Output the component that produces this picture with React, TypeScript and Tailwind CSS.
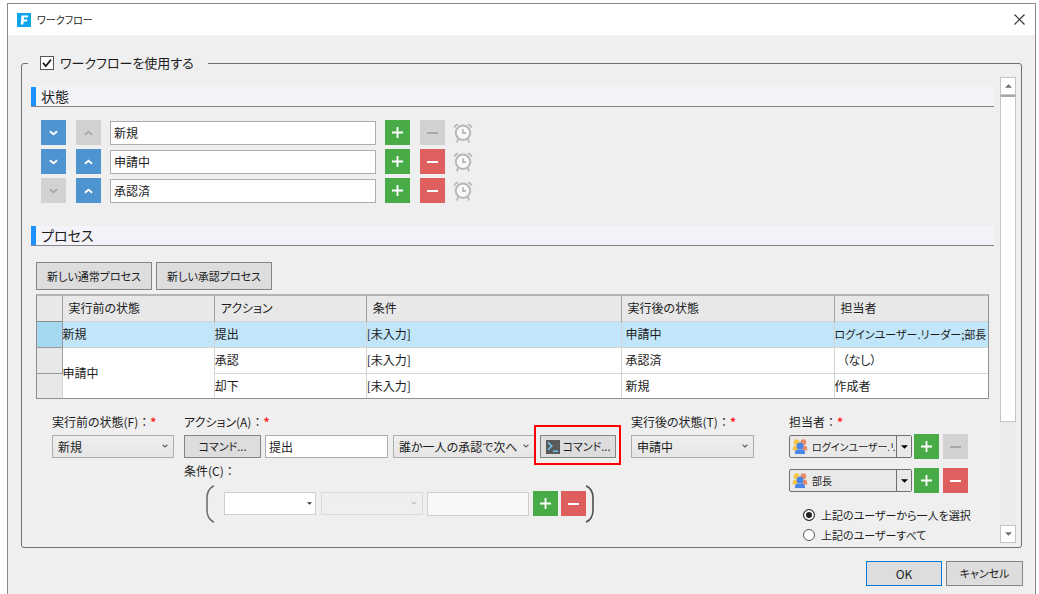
import React from 'react';

const initialStates = ['新規', '申請中', '承認済'];

function Chevron({ up = false, className = '' }: { up?: boolean; className?: string }) {
  return (
    <svg viewBox="0 0 10 6" className={className} fill="none" stroke="currentColor" strokeWidth="2" aria-hidden="true">
      <path d={up ? 'M1 5 L5 1.6 L9 5' : 'M1 1 L5 4.4 L9 1'} />
    </svg>
  );
}

function Triangle({ up = false, className = '' }: { up?: boolean; className?: string }) {
  return (
    <svg viewBox="0 0 8 4" className={className} fill="currentColor" aria-hidden="true">
      <path d={up ? 'M0 4 L4 0 L8 4 Z' : 'M0 0 L4 4 L8 0 Z'} />
    </svg>
  );
}

function AlarmClock() {
  return (
    <svg viewBox="0 0 20 20" className="h-5 w-5" fill="none" aria-hidden="true">
      <circle cx="10" cy="9.8" r="7.2" fill="#f8f8f8" stroke="#b8b8b8" strokeWidth="2" />
      <path d="M10 6.2 V10 H13" stroke="#b8b8b8" strokeWidth="1.8" />
      <path d="M1.2 4.8 Q2.2 2 5 1.4 M18.8 4.8 Q17.8 2 15 1.4" stroke="#b8b8b8" strokeWidth="1.7" />
      <path d="M5.2 15.6 L4 19.4 M14.8 15.6 L16 19.4" stroke="#b8b8b8" strokeWidth="1.8" />
    </svg>
  );
}

function Users() {
  return (
    <svg viewBox="0 0 16 15" className="h-[15px] w-4" aria-hidden="true">
      <circle cx="4.6" cy="3.2" r="2.9" fill="#f6c544" />
      <path d="M0.8 11.6 V9.4 Q0.8 6.8 3.4 6.8 H6 V11.6 Z" fill="#f6c544" />
      <circle cx="11.4" cy="3.2" r="2.9" fill="#ea8a66" />
      <path d="M15.2 11.6 V9.4 Q15.2 6.8 12.6 6.8 H10 V11.6 Z" fill="#ea8a66" />
      <circle cx="8" cy="7" r="3.5" fill="#4a86e8" />
      <path d="M3 15 V13.8 Q3 10.6 6.2 10.6 H9.8 Q13 10.6 13 13.8 V15 Z" fill="#4a86e8" />
    </svg>
  );
}

function MoveButton({ up = false, disabled = false }: { up?: boolean; disabled?: boolean }) {
  return (
    <button
      type="button"
      disabled={disabled}
      aria-label={up ? '上へ' : '下へ'}
      className="flex h-[25px] w-[25px] shrink-0 items-center justify-center bg-[#4d94d0] text-white disabled:bg-[#d2d2d2] disabled:text-[#a8a8a8]"
    >
      <Chevron up={up} className="h-[6px] w-[9px]" />
    </button>
  );
}

function AddButton() {
  return (
    <button type="button" aria-label="追加" className="flex h-[25px] w-[25px] shrink-0 items-center justify-center bg-[#48ab48] text-white">
      <svg viewBox="0 0 11 11" className="h-[11px] w-[11px]" fill="currentColor" aria-hidden="true">
        <path d="M4.6 0 H6.4 V4.6 H11 V6.4 H6.4 V11 H4.6 V6.4 H0 V4.6 H4.6 Z" />
      </svg>
    </button>
  );
}

function RemoveButton({ disabled = false }: { disabled?: boolean }) {
  return (
    <button
      type="button"
      disabled={disabled}
      aria-label="削除"
      className="flex h-[25px] w-[25px] shrink-0 items-center justify-center bg-[#df5f5f] text-white disabled:bg-[#d2d2d2] disabled:text-[#a8a8a8]"
    >
      <svg viewBox="0 0 11 2" className="h-[2px] w-[11px]" fill="currentColor" aria-hidden="true">
        <path d="M0 0 H11 V2 H0 Z" />
      </svg>
    </button>
  );
}

function Select({ id, label, options, disabled = false }: { id: string; label?: string; options: string[]; disabled?: boolean }) {
  return (
    <div className="relative w-full">
      <select
        id={id}
        aria-label={label}
        disabled={disabled}
        className="h-[23px] w-full appearance-none border border-[#adadad] bg-gradient-to-b from-[#efefef] to-[#e5e5e5] pr-4 pl-[5px] disabled:border-[#d9d9d9] disabled:from-[#efefef] disabled:to-[#efefef]"
      >
        {options.map(o => (
          <option key={o}>{o}</option>
        ))}
      </select>
      <Chevron className={disabled ? 'pointer-events-none absolute top-[9px] right-[6px] h-1 w-[6px] text-[#bfbfbf]' : 'pointer-events-none absolute top-[9px] right-[6px] h-1 w-[6px] text-[#606060]'} />
    </div>
  );
}

function AssigneeRow({ id, value, removable = true }: { id: string; value: string; removable?: boolean }) {
  return (
    <div className="flex h-[25px] items-center">
      <div className="relative mr-[2px] w-[123px]">
        <select
          id={id}
          aria-label="担当者"
          className="h-[23px] w-full appearance-none rounded-[2px] border border-[#707070] bg-[#e9e9e9] pr-4 pl-[22px] text-[10px]"
        >
          <option>{value}</option>
        </select>
        <span className="pointer-events-none absolute top-1 left-[3px]">
          <Users />
        </span>
        <span className="pointer-events-none absolute inset-y-px right-px flex w-[15px] items-center justify-center border-l border-[#707070] bg-[#e9e9e9]">
          <Triangle className="h-1 w-[7px] text-black" />
        </span>
      </div>
      <AddButton />
      <span className="ml-1">
        <RemoveButton disabled={!removable} />
      </span>
    </div>
  );
}

function SectionTitle({ children }: { children: React.ReactNode }) {
  return (
    <h2 className="h-5 border-b border-[#858588] bg-[#f3f3f9] text-sm leading-[19px]">
      <span className="block h-[19px] border-l-[5px] border-[#1e90ff] pl-[5px]">{children}</span>
    </h2>
  );
}

function FieldLabel({ htmlFor, required = true, children }: { htmlFor: string; required?: boolean; children: React.ReactNode }) {
  return (
    <label htmlFor={htmlFor} className="block h-5 whitespace-nowrap leading-5">
      {children}
      <span className="[font-feature-settings:normal]">：</span>
      {required && <span className="font-bold text-[#ff2020]">*</span>}
    </label>
  );
}

const pushButton = 'border border-[#858585] bg-[#dddddd] text-[11px] whitespace-nowrap';
const cell = 'border border-[#d4d4d4] p-0';

export default function App() {
  const [enabled, setEnabled] = React.useState(true);
  const [states, setStates] = React.useState(initialStates);
  const [assignMode, setAssignMode] = React.useState('one');

  const renameState = (index: number, value: string) => {
    setStates(states.map((s, i) => (i === index ? value : s)));
  };

  return (
    <div className="flex min-h-screen flex-col bg-white pt-[3px] pr-[3px] pl-[7px] font-['Noto_Sans_CJK_JP',sans-serif] text-xs text-[#1c1c1c] [font-feature-settings:'palt']">
      <main className="flex flex-1 flex-col border-x border-t border-[#8a8a8a] bg-[#efefef]">
        {/* Title bar */}
        <header className="flex h-[31px] items-center bg-white pr-[10px] pl-[9px]">
          <svg viewBox="0 0 14 14" className="h-[14px] w-[14px]" aria-hidden="true">
            <rect width="14" height="14" fill="#0ea5e9" />
            <path d="M4.4 2.4 H11 V4.6 H6.9 V6.4 H10.2 V8.4 H6.7 L6.3 11.6 H3.8 Z" fill="#fff" />
          </svg>
          <h1 className="ml-[6px] text-[10px] leading-4">ワークフロー</h1>
          <button type="button" aria-label="閉じる" className="ml-auto">
            <svg viewBox="0 0 11 11" className="h-[11px] w-[11px]" fill="none" stroke="#333" strokeWidth="1.2" aria-hidden="true">
              <path d="M0.5 0.5 L10.5 10.5 M10.5 0.5 L0.5 10.5" />
            </svg>
          </button>
        </header>

        <fieldset className="mx-[13px] mt-[18px] min-w-0 rounded-[3px] border border-[#707070] pb-[2px]">
          <legend className="ml-[6px] h-5 pr-[14px] pl-3 text-[13px] leading-5">
            <label className="flex items-center gap-[6px]">
              <span className="relative flex h-[14px] w-[14px]">
                <input
                  type="checkbox"
                  checked={enabled}
                  onChange={e => setEnabled(e.target.checked)}
                  className="peer h-[14px] w-[14px] appearance-none border border-[#555] bg-white"
                />
                <svg viewBox="0 0 14 14" className="pointer-events-none absolute inset-0 hidden h-[14px] w-[14px] peer-checked:block" fill="none" stroke="#222" strokeWidth="1.8" aria-hidden="true">
                  <path d="M3 6.8 L5.8 10 L11 3.6" />
                </svg>
              </span>
              ワークフローを使用する
            </label>
          </legend>

          <div className="flex pr-[5px] pl-[9px]">
            <div className="min-w-0 flex-1 pt-[14px]">
              <SectionTitle>状態</SectionTitle>
              <ul className="mt-[13px] ml-[10px] flex flex-col gap-1">
                {states.map((s, i) => (
                  <li key={i} className="flex h-[25px] items-center">
                    <MoveButton disabled={i === states.length - 1} />
                    <span className="ml-[10px]">
                      <MoveButton up disabled={i === 0} />
                    </span>
                    <input
                      type="text"
                      aria-label="状態"
                      value={s}
                      onChange={e => renameState(i, e.target.value)}
                      className="mx-[9px] h-6 w-[266px] border border-[#abadb3] bg-white px-[3px]"
                    />
                    <AddButton />
                    <span className="ml-[10px]">
                      <RemoveButton disabled={i === 0} />
                    </span>
                    <span className="ml-2">
                      <AlarmClock />
                    </span>
                  </li>
                ))}
              </ul>

              <div className="mt-[23px]">
                <SectionTitle>プロセス</SectionTitle>
              </div>
              <div className="mt-4 ml-[5px] flex gap-1">
                <button type="button" className={`${pushButton} h-7 w-[116px]`}>新しい通常プロセス</button>
                <button type="button" className={`${pushButton} h-7 w-[116px]`}>新しい承認プロセス</button>
              </div>

              <div className="mt-1 mr-[5px] ml-[5px] border border-t-2 border-[#909090] border-t-[#b4b4b4]">
                <table className="w-full table-fixed border-collapse border-hidden bg-white whitespace-nowrap">
                  <colgroup>
                    <col className="w-[25px]" />
                    <col className="w-[16%]" />
                    <col className="w-[16%]" />
                    <col />
                    <col className="w-[213px]" />
                    <col className="w-[154px]" />
                  </colgroup>
                  <thead>
                    <tr className="h-[25px] border-b border-[#8c8c8c] bg-[#e8e8e8] text-left">
                      <th className="border-r border-[#a0a0a0]" />
                      {['実行前の状態', 'アクション', '条件', '実行後の状態', '担当者'].map(h => (
                        <th key={h} className="border-r border-[#a0a0a0] p-0 pl-[6px] font-normal">{h}</th>
                      ))}
                    </tr>
                  </thead>
                  <tbody>
                    <tr className="h-[26px] bg-[#c1e6f9]">
                      <td className="border-r border-b border-[#9a9a9a] bg-[#a5d8f1]" />
                      <td className={cell}>新規</td>
                      <td className={cell}>提出</td>
                      <td className={cell}>[未入力]</td>
                      <td className={`${cell} pl-1`}>申請中</td>
                      <td className={`${cell} text-[11px]`}>ログインユーザー.リーダー;部長</td>
                    </tr>
                    <tr className="h-[26px]">
                      <td className="border-r border-b border-[#9a9a9a] bg-[#e8e8e8]" />
                      <td rowSpan={2} className={cell}>申請中</td>
                      <td className={cell}>承認</td>
                      <td className={cell}>[未入力]</td>
                      <td className={`${cell} pl-1`}>承認済</td>
                      <td className={`${cell} pl-2`}>（なし）</td>
                    </tr>
                    <tr className="h-[25px]">
                      <td className="border-r border-[#9a9a9a] bg-[#e8e8e8]" />
                      <td className={cell}>却下</td>
                      <td className={cell}>[未入力]</td>
                      <td className={`${cell} pl-1`}>新規</td>
                      <td className={cell}>作成者</td>
                    </tr>
                  </tbody>
                </table>
              </div>

              {/* Process detail */}
              <div className="mt-[13px] ml-[21px] flex items-start">
                <div className="flex w-[122px] flex-col gap-[3px]">
                  <FieldLabel htmlFor="from">実行前の状態(F)</FieldLabel>
                  <Select id="from" options={['新規', '申請中', '承認済']} />
                </div>

                <div className="ml-[10px] flex w-[432px] flex-col gap-[3px]">
                  <FieldLabel htmlFor="action">アクション(A)</FieldLabel>
                  <div className="flex">
                    <button type="button" className={`${pushButton} h-[23px] w-[77px]`}>コマンド...</button>
                    <input id="action" type="text" defaultValue="提出" className="ml-1 h-[23px] w-[123px] border border-[#abadb3] bg-white px-[3px]" />
                    <div className="ml-[5px] w-[142px]">
                      <Select id="approval" label="承認方法" options={['誰か一人の承認で次へ']} />
                    </div>
                    <div className="relative ml-[5px] w-[76px]">
                      <button type="button" className={`${pushButton} flex h-[23px] w-full items-center justify-center gap-[3px]`}>
                        <svg viewBox="0 0 14 14" className="h-[14px] w-[14px] shrink-0" fill="none" stroke="#6cc5f5" strokeWidth="1.6" aria-hidden="true">
                          <rect width="14" height="14" fill="#5a5a5a" stroke="none" />
                          <path d="M2 2.4 L5.8 6 L2 9.8 M7 11.2 H12" />
                        </svg>
                        コマンド...
                      </button>
                      <span className="pointer-events-none absolute -top-[10px] -right-[5px] -bottom-[7px] -left-[6px] border-2 border-[#f00]" />
                    </div>
                  </div>
                  <FieldLabel htmlFor="condition" required={false}>条件(C)</FieldLabel>
                  <div className="ml-[22px] flex h-[39px] items-center">
                    <svg viewBox="0 0 8 38" className="mr-[10px] h-[38px] w-2" fill="none" stroke="#707070" strokeWidth="1.6" aria-hidden="true">
                      <path d="M8 0.8 Q1 4 1 13 V25 Q1 34 8 37.2" />
                    </svg>
                    <div className="relative w-[92px]">
                      <select id="condition" className="h-[23px] w-full appearance-none border border-[#cfcfcf] bg-white px-1">
                        <option />
                      </select>
                      <Triangle className="pointer-events-none absolute top-[10px] right-[4px] h-[3px] w-[5px] text-[#333]" />
                    </div>
                    <div className="ml-[5px] w-[102px]">
                      <Select id="operator" label="演算子" options={['']} disabled />
                    </div>
                    <input type="text" aria-label="値" disabled className="mr-1 ml-1 h-6 w-[102px] border border-[#cfcfcf] bg-[#f8f8f8]" />
                    <AddButton />
                    <span className="ml-[3px]">
                      <RemoveButton />
                    </span>
                    <svg viewBox="0 0 8 38" className="h-[38px] w-2" fill="none" stroke="#505050" strokeWidth="1.6" aria-hidden="true">
                      <path d="M0 0.8 Q7 4 7 13 V25 Q7 34 0 37.2" />
                    </svg>
                  </div>
                </div>

                <div className="ml-[15px] flex w-[123px] flex-col gap-[3px]">
                  <FieldLabel htmlFor="to">実行後の状態(T)</FieldLabel>
                  <Select id="to" options={['申請中', '承認済', '新規']} />
                </div>

                <div className="ml-[35px]">
                  <FieldLabel htmlFor="assignee">担当者</FieldLabel>
                  <div className="mt-[2px] flex flex-col gap-[9px]">
                    <AssigneeRow id="assignee" value="ログインユーザー.リーダー" removable={false} />
                    <AssigneeRow id="assignee2" value="部長" />
                  </div>
                  <div className="mt-3 ml-[14px] text-[11px]">
                    {[
                      ['one', '上記のユーザーから一人を選択'],
                      ['all', '上記のユーザーすべて'],
                    ].map(([mode, text]) => (
                      <label key={mode} className="flex h-5 items-center gap-[6px] whitespace-nowrap">
                        <input
                          type="radio"
                          name="assignMode"
                          checked={assignMode === mode}
                          onChange={() => setAssignMode(mode)}
                          className="h-3 w-3 appearance-none rounded-full border border-[#555] bg-white checked:border-[#333] checked:bg-[#222] checked:shadow-[inset_0_0_0_2px_white]"
                        />
                        {text}
                      </label>
                    ))}
                  </div>
                </div>
              </div>
            </div>

            {/* Scroll bar */}
            <div className="mt-1 mb-[2px] ml-[6px] flex w-4 flex-col bg-[#ebebeb]">
              <div className="flex h-[18px] items-center justify-center border border-[#c4c4c4] bg-white text-[#707070]">
                <Triangle up className="h-1 w-[7px]" />
              </div>
              <div className="h-[327px] border border-t-2 border-[#c4c4c4] border-t-[#a8a8a8] bg-white" />
              <div className="mt-auto flex h-[18px] items-center justify-center border border-[#c4c4c4] bg-white text-[#707070]">
                <Triangle className="h-1 w-[7px]" />
              </div>
            </div>
          </div>
        </fieldset>

        <footer className="mt-[13px] mr-3 flex justify-end gap-1">
          <button type="button" className="h-[25px] w-[76px] border border-[#0078d7] bg-[#dddddd]">OK</button>
          <button type="button" className={`${pushButton} h-[25px] w-[77px]`}>キャンセル</button>
        </footer>
      </main>
    </div>
  );
}
